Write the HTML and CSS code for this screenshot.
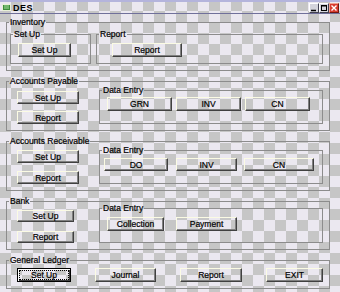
FILE: index.html
```html
<!DOCTYPE html>
<html lang="en">
<head>
    <meta charset="UTF-8" />
    <title>DES</title>
    <link rel="stylesheet" href="styles.css">
</head>
<body>
    <!-- Window title bar -->
    <div class="titlebar">
        <svg class="app-icon" width="9" height="7" viewBox="0 0 9 7">
            <rect x="0" y="0" width="9" height="7" fill="#e8f0d8"/>
            <rect x="1" y="1" width="7" height="5" fill="#3c8c3c"/>
            <path d="M2 2h5M2 4h5" stroke="#a8e0a0" stroke-width="1"/>
        </svg>
        <span class="title">DES</span>
        <div class="controls">
            <span class="ctl">
                <svg width="10" height="10" viewBox="0 0 10 10"><path d="M2 7.5h5" stroke="#000" stroke-width="1.5"/></svg>
            </span>
            <span class="ctl">
                <svg width="10" height="10" viewBox="0 0 10 10"><rect x="2.5" y="2.5" width="5" height="5" fill="none" stroke="#000"/><path d="M2 3h6" stroke="#000"/></svg>
            </span>
            <span class="ctl close">
                <svg width="10" height="10" viewBox="0 0 10 10"><path d="M2.5 2.5l5 5M7.5 2.5l-5 5" stroke="#fff" stroke-width="1.4"/></svg>
            </span>
        </div>
    </div>

    <div class="content">
        <!-- Inventory -->
        <fieldset class="group inventory">
            <legend>Inventory</legend>
            <div class="inv-row">
                <fieldset class="sub inv-setup">
                    <legend>Set Up</legend>
                    <div class="sub-body inv-setup-body">
                        <button class="btn w-53 h-14">Set Up</button>
                    </div>
                </fieldset>
                <fieldset class="sub inv-report">
                    <legend>Report</legend>
                    <div class="sub-body inv-report-body">
                        <button class="btn w-70 h-14">Report</button>
                    </div>
                </fieldset>
            </div>
        </fieldset>

        <!-- Accounts Payable -->
        <fieldset class="group payable">
            <legend>Accounts Payable</legend>
            <div class="body">
                <div class="left ap-left">
                    <button class="btn w-62 h-13">Set Up</button>
                    <button class="btn w-62 h-13">Report</button>
                </div>
                <fieldset class="sub entry ap-entry">
                    <legend>Data Entry</legend>
                    <div class="sub-body ap-entry-body">
                        <button class="btn w-65 h-14">GRN</button>
                        <button class="btn w-65 h-14">INV</button>
                        <button class="btn w-65 h-14">CN</button>
                    </div>
                </fieldset>
            </div>
        </fieldset>

        <!-- Accounts Receivable -->
        <fieldset class="group receivable">
            <legend>Accounts Receivable</legend>
            <div class="body">
                <div class="left ar-left">
                    <button class="btn w-62 h-13">Set Up</button>
                    <button class="btn w-62 h-13">Report</button>
                </div>
                <fieldset class="sub entry ar-entry">
                    <legend>Data Entry</legend>
                    <div class="sub-body ar-entry-body">
                        <button class="btn w-64 h-13">DO</button>
                        <button class="btn w-61 h-13 ar-inv">INV</button>
                        <button class="btn w-70 h-13 ar-cn">CN</button>
                    </div>
                </fieldset>
            </div>
        </fieldset>

        <!-- Bank -->
        <fieldset class="group bank">
            <legend>Bank</legend>
            <div class="body bank-body">
                <div class="left bank-left">
                    <button class="btn w-57 h-12">Set Up</button>
                    <button class="btn w-57 h-12">Report</button>
                </div>
                <fieldset class="sub entry bank-entry">
                    <legend>Data Entry</legend>
                    <div class="sub-body bank-entry-body">
                        <button class="btn w-57 h-14">Collection</button>
                        <button class="btn w-61 h-14">Payment</button>
                    </div>
                </fieldset>
            </div>
        </fieldset>

        <!-- General Ledger -->
        <fieldset class="group ledger">
            <legend>General Ledger</legend>
            <div class="gl-row">
                <button class="btn w-54 h-14 focus">Set Up</button>
                <button class="btn w-61 h-14">Journal</button>
                <button class="btn w-62 h-14">Report</button>
                <button class="btn w-57 h-14">EXIT</button>
            </div>
        </fieldset>
    </div>
</body>
</html>
```

FILE: styles.css
```css
/* --- Reset --- */
* {
    box-sizing: border-box;
}

body {
    margin: 0;
    width: 340px;
    height: 292px;
    overflow: hidden;
    font-family: "Liberation Sans", Arial, sans-serif;
    font-size: 8px;
    color: #000;
    /* dithered checker look of the old 256 colour capture */
    background-color: #d8d6de;
    background-image: conic-gradient(#c6c6c6 25%, #ebe8f0 0 50%, #c6c6c6 0 75%, #ebe8f0 0);
    background-size: 22px 22px;
}

/* --- Title bar --- */
.titlebar {
    height: 14px;
    display: flex;
    align-items: center;
    padding: 0 1px 0 2px;
    border-top: 2px solid #b4b4dc;
    border-bottom: 1px solid #70709a;
}

.app-icon {
    margin-right: 2px;
}

.title {
    font-size: 9px;
    font-weight: bold;
    letter-spacing: 0.5px;
}

.controls {
    margin-left: auto;
    display: flex;
}

.ctl {
    width: 10px;
    height: 10px;
    display: flex;
    background: #d4d4dc;
    border: 1px solid;
    border-color: #fff #404050 #404050 #fff;
}

.ctl svg {
    margin: -1px;
}

.ctl.close {
    background: #d83c30;
    border-color: #f0a090 #701810 #701810 #f0a090;
}

/* --- Main area --- */
.content {
    width: 330px;
    padding: 2px 0 0 6px;
    display: flex;
    flex-direction: column;
    gap: 4px;
}

fieldset {
    margin: 0;
    padding: 0;
    min-width: 0;
    border: 1px solid #8c8c8c;
}

legend {
    margin-left: 2px;
    padding: 0 1px;
    line-height: 12px;
    font-size: 8.5px;
    -webkit-text-stroke: 0.2px #000;
}

.inventory { height: 55px; }
.payable { height: 56px; }
.receivable { height: 56px; }
.bank { height: 55px; }
.ledger { height: 35px; }

/* --- Buttons --- */
.btn {
    display: flex;
    align-items: center;
    justify-content: center;
    padding: 0;
    margin: 0;
    font-family: inherit;
    font-size: 8.5px;
    -webkit-text-stroke: 0.2px #000;
    color: #000;
    background: transparent;
    border: 1px solid;
    border-color: #fbfbe4 #404040 #404040 #fbfbe4;
    box-shadow: inset -1px -1px #808080;
}

.btn.focus {
    border-color: #000;
    box-shadow: inset 1px 1px #fff, inset -1px -1px #404040;
    outline: 1px dotted #000;
    outline-offset: -3px;
}

.w-53 { width: 53px; }
.w-54 { width: 54px; }
.w-57 { width: 57px; }
.w-61 { width: 61px; }
.w-62 { width: 62px; }
.w-64 { width: 64px; }
.w-65 { width: 65px; }
.w-70 { width: 70px; }

.h-12 { height: 12px; }
.h-13 { height: 13px; }
.h-14 { height: 14px; }

/* --- Inventory --- */
.inv-row {
    display: flex;
    gap: 5px;
    padding: 0 6px 0 3px;
}

.sub {
    height: 36px;
}

.inv-setup {
    width: 81px;
}

.inv-report {
    flex: 1;
}

.sub-body {
    display: flex;
}

.inv-setup-body {
    padding: 3px 0 0 7px;
}

.inv-report-body {
    padding: 3px 0 0 15px;
}

/* --- Section with buttons on the left and a data entry box --- */
.body {
    display: flex;
    margin-top: -3px;
    padding: 0 6px 0 10px;
}

.bank-body {
    margin-top: -5px;
}

.left {
    width: 82px;
    display: flex;
    flex-direction: column;
}

.ap-left {
    padding-top: 7px;
    gap: 7px;
}

.ar-left {
    padding-top: 6px;
    gap: 8px;
}

.bank-left {
    padding-top: 8px;
    gap: 9px;
}

.entry {
    flex: 1;
    height: 40px;
}

.bank-entry {
    height: 41px;
}

.ap-entry-body {
    padding: 1px 0 0 7px;
    gap: 4px;
}

.ar-entry-body {
    padding: 2px 0 0 4px;
}

.ar-inv {
    margin-left: 8px;
}

.ar-cn {
    margin-left: 7px;
}

.bank-entry-body {
    padding: 3px 0 0 7px;
    gap: 12px;
}

/* --- General Ledger --- */
.gl-row {
    display: flex;
    gap: 24px;
    padding: 2px 0 0 10px;
}
```
